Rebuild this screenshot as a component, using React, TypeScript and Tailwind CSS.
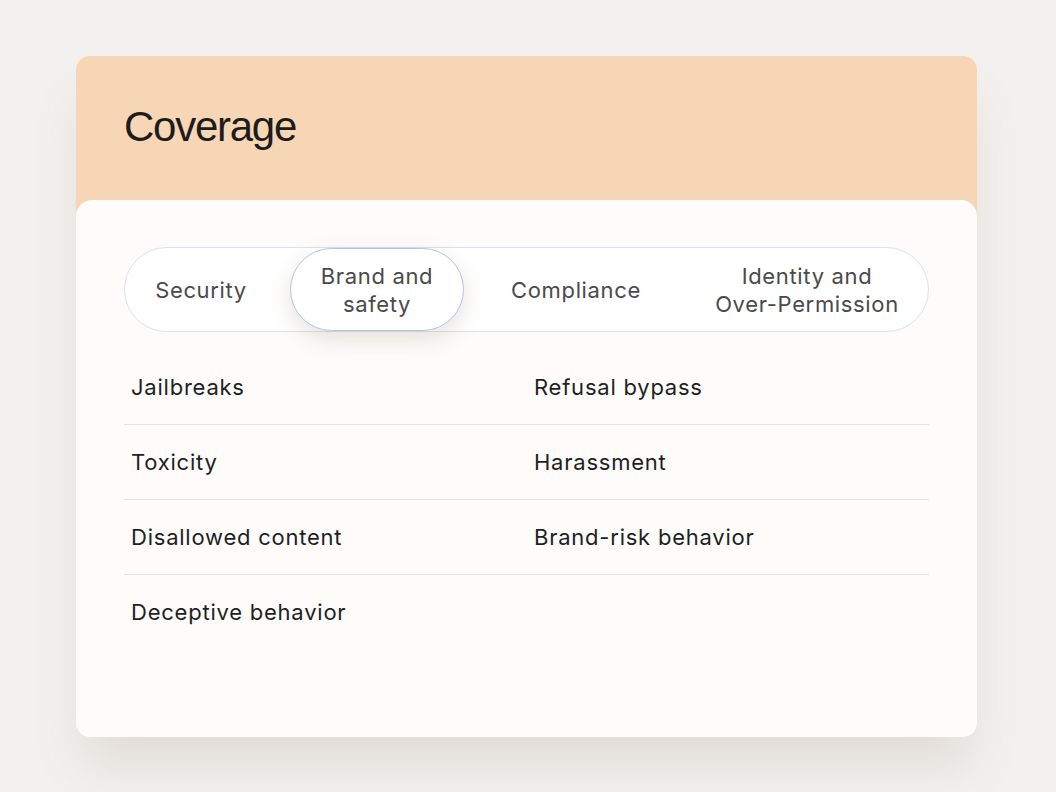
import React, { useState } from 'react';

const tabs = [
  { label: ['Security'], width: 'w-[150px]' },
  { label: ['Brand and', 'safety'], width: 'w-[174px]' },
  { label: ['Compliance'], width: 'w-[196px]' },
  { label: ['Identity and', 'Over-Permission'], width: 'w-[226px]' },
];

const items = [
  ['Jailbreaks', 'Refusal bypass'],
  ['Toxicity', 'Harassment'],
  ['Disallowed content', 'Brand-risk behavior'],
  ['Deceptive behavior', ''],
];

const App: React.FC = () => {
  const [active, setActive] = useState(1);

  return (
    <div className="min-h-[792px] w-full bg-[#f3f1ef] pt-[56px] font-['Inter',sans-serif]">
      <div className="ml-[76px] w-[901px] rounded-[14px] bg-[#f7d6b6] shadow-[0_36px_50px_-6px_rgba(120,100,80,0.14)]">
        {/* Header */}
        <div className="h-[144px] pl-[48px] pt-[50px]">
          <h1 className="font-['Liberation_Sans',Arial,sans-serif] text-[42px] leading-none tracking-[-0.03em] text-[#1c1c1c]">
            Coverage
          </h1>
        </div>

        {/* Body */}
        <div className="h-[537px] rounded-[16px] rounded-b-[14px] bg-[#fdfcfa] px-[48px] pt-[47px]">
          <div className="flex h-[85px] items-center rounded-full border border-[#dde0ec] bg-white pl-px">
            {tabs.map((tab, i) => (
              <button
                key={i}
                onClick={() => setActive(i)}
                className={`flex h-[83px] shrink-0 flex-col items-center justify-center rounded-full text-center text-[22px] leading-[28px] tracking-[0.03em] text-[#4a4a4a] ${tab.width} ${
                  i === 1 || i === 2 ? 'ml-[14px]' : ''
                } ${i === 3 ? 'ml-[20px]' : ''} ${
                  i === active
                    ? 'border border-[#b8c2e0] bg-white shadow-[0_8px_22px_rgba(120,100,80,0.18)]'
                    : 'border border-transparent'
                }`}
              >
                {tab.label.map((line) => (
                  <span key={line} className="whitespace-nowrap">
                    {line}
                  </span>
                ))}
              </button>
            ))}
          </div>

          <div className="mt-[18px]">
            {items.map((row, i) => (
              <div
                key={i}
                className={`grid h-[75px] grid-cols-[403px_1fr] items-center px-[7px] text-[22px] tracking-[0.035em] text-[#1f1f1f] ${
                  i < items.length - 1 ? 'border-b border-[#e6e4e2]' : ''
                }`}
              >
                <span>{row[0]}</span>
                <span>{row[1]}</span>
              </div>
            ))}
          </div>
        </div>
      </div>
    </div>
  );
};

export default App;
